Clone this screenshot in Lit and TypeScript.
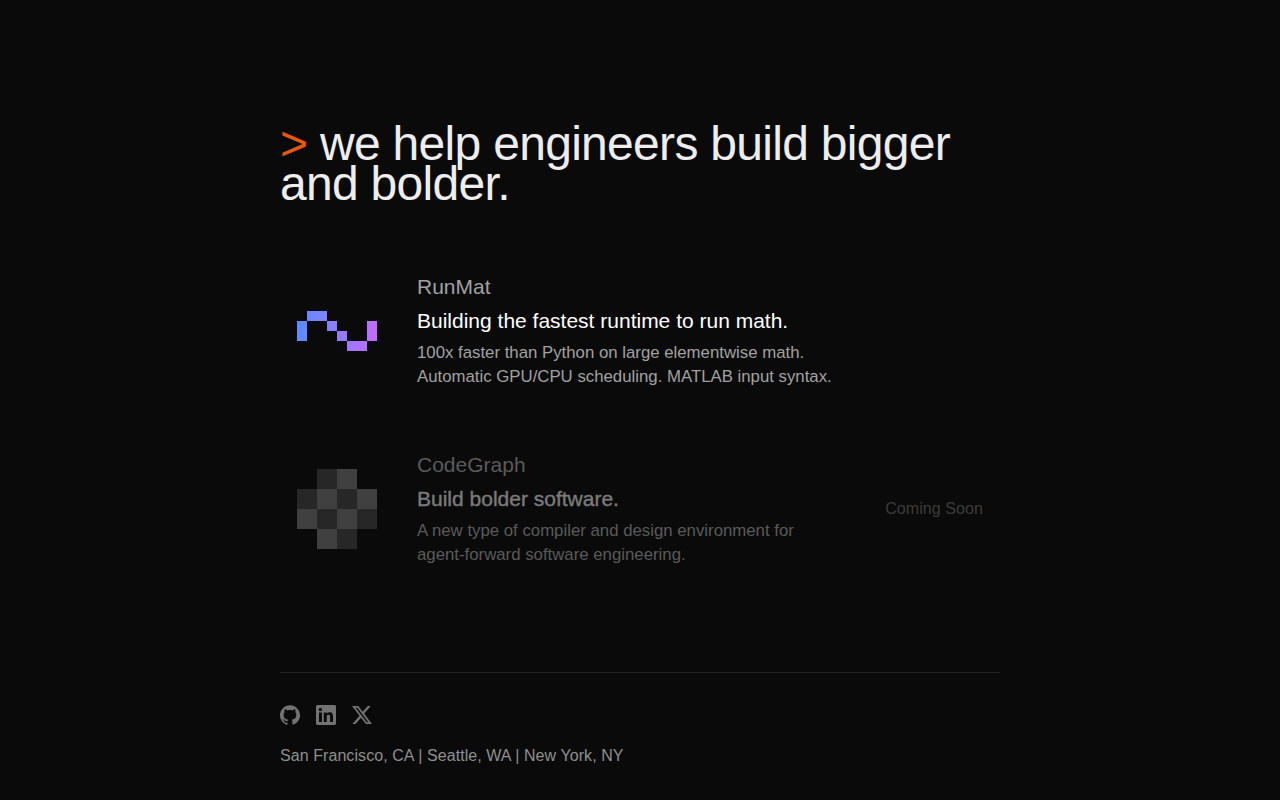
import { LitElement, html, css, svg } from 'lit';
import { customElement } from 'lit/decorators.js';

// [col, row, colour] on a 20px grid
const GRAPH_CELLS: [number, number, string][] = [
  [1, 0, '#272727'], [2, 0, '#404040'],
  [0, 1, '#272727'], [1, 1, '#404040'], [2, 1, '#272727'], [3, 1, '#404040'],
  [0, 2, '#404040'], [1, 2, '#272727'], [2, 2, '#404040'], [3, 2, '#272727'],
  [1, 3, '#404040'], [2, 3, '#272727'],
];

@customElement('app-root')
export class AppRoot extends LitElement {
  static styles = css`
    :host {
      display: block;
      min-height: 800px;
      background: #0a0a0a;
      font-family: 'Liberation Sans', Arial, sans-serif;
    }

    .page {
      width: 720px;
      margin: 0 auto;
      padding-top: 124px;
    }

    h1 {
      margin: 0 0 53px;
      font-size: 48px;
      line-height: 40px;
      font-weight: 400;
      letter-spacing: -0.7px;
      color: #ededed;
    }

    h1 span {
      color: #ea580c;
    }

    .projects {
      display: flex;
      flex-direction: column;
      gap: 30px;
    }

    .project {
      display: flex;
      align-items: center;
      gap: 40px;
      padding: 16px 17px;
    }

    .logo {
      flex: none;
      display: block;
      width: 80px;
      height: 80px;
    }

    .body {
      flex: 1;
    }

    .name {
      font-size: 21px;
      line-height: 28px;
      color: #a1a1a1;
      margin-bottom: 6px;
    }

    .tagline {
      font-size: 21px;
      line-height: 28px;
      color: #ffffff;
      margin-bottom: 6px;
    }

    .desc {
      font-size: 16.8px;
      line-height: 24px;
      color: #a1a1a1;
    }

    .project.soon .name,
    .project.soon .desc {
      color: #5a5a5a;
    }

    .project.soon .tagline {
      color: #7a7a7a;
      -webkit-text-stroke: 0.4px #7a7a7a;
    }

    .badge {
      flex: none;
      font-size: 16px;
      letter-spacing: 0.08px;
      color: #3c3c3c;
    }

    footer {
      margin-top: 89px;
      border-top: 1px solid #232323;
      padding-top: 32px;
    }

    .social {
      display: flex;
      gap: 16px;
      margin-bottom: 19px;
    }

    .social svg {
      display: block;
      width: 20px;
      height: 20px;
      fill: #737373;
    }

    .offices {
      font-size: 16px;
      line-height: 24px;
      letter-spacing: 0.07px;
      color: #8f8f8f;
    }
  `;

  private runmatLogo() {
    return html`<svg class="logo" viewBox="0 0 80 80">
      <defs>
        <linearGradient id="rm" gradientUnits="userSpaceOnUse" x1="0" y1="0" x2="80" y2="0">
          <stop offset="0" stop-color="#5a8dff"></stop>
          <stop offset="1" stop-color="#c26bff"></stop>
        </linearGradient>
      </defs>
      <path fill="url(#rm)" d="M0 10h10v20H0zM10 0h20v10H10zM30 10h10v10H30zM40 20h10v10H40zM50 30h20v10H50zM70 10h10v20H70z" transform="translate(0 20)"></path>
    </svg>`;
  }

  private graphLogo() {
    return html`<svg class="logo" viewBox="0 0 80 80">
      ${GRAPH_CELLS.map(([c, r, fill]) => svg`<rect x=${c * 20} y=${r * 20} width="20" height="20" fill=${fill}></rect>`)}
    </svg>`;
  }

  render() {
    return html`
      <div class="page">
        <h1><span>&gt;</span> we help engineers build bigger and bolder.</h1>
        <div class="projects">
          <div class="project">
            ${this.runmatLogo()}
            <div class="body">
              <div class="name">RunMat</div>
              <div class="tagline">Building the fastest runtime to run math.</div>
              <div class="desc">100x faster than Python on large elementwise math.<br />Automatic GPU/CPU scheduling. MATLAB input syntax.</div>
            </div>
          </div>
          <div class="project soon">
            ${this.graphLogo()}
            <div class="body">
              <div class="name">CodeGraph</div>
              <div class="tagline">Build bolder software.</div>
              <div class="desc">A new type of compiler and design environment for<br />agent-forward software engineering.</div>
            </div>
            <div class="badge">Coming Soon</div>
          </div>
        </div>
        <footer>
          <div class="social">
            <svg viewBox="0 0 24 24"><path d="M12 .297c-6.63 0-12 5.373-12 12 0 5.303 3.438 9.8 8.205 11.385.6.113.82-.258.82-.577 0-.285-.01-1.04-.015-2.04-3.338.724-4.042-1.61-4.042-1.61C4.422 18.07 3.633 17.7 3.633 17.7c-1.087-.744.084-.729.084-.729 1.205.084 1.838 1.236 1.838 1.236 1.07 1.835 2.809 1.305 3.495.998.108-.776.417-1.305.76-1.605-2.665-.3-5.466-1.332-5.466-5.93 0-1.31.465-2.38 1.235-3.22-.135-.303-.54-1.523.105-3.176 0 0 1.005-.322 3.3 1.23.96-.267 1.98-.399 3-.405 1.02.006 2.04.138 3 .405 2.28-1.552 3.285-1.23 3.285-1.23.645 1.653.24 2.873.12 3.176.765.84 1.23 1.91 1.23 3.22 0 4.61-2.805 5.625-5.475 5.92.42.36.81 1.096.81 2.22 0 1.606-.015 2.896-.015 3.286 0 .315.21.69.825.57C20.565 22.092 24 17.592 24 12.297c0-6.627-5.373-12-12-12"></path></svg>
            <svg viewBox="0 0 24 24"><path d="M20.447 20.452h-3.554v-5.569c0-1.328-.027-3.037-1.852-3.037-1.853 0-2.136 1.445-2.136 2.939v5.667H9.351V9h3.414v1.561h.046c.477-.9 1.637-1.85 3.37-1.85 3.601 0 4.267 2.37 4.267 5.455v6.286zM5.337 7.433c-1.144 0-2.063-.926-2.063-2.065 0-1.138.92-2.063 2.063-2.063 1.14 0 2.064.925 2.064 2.063 0 1.139-.925 2.065-2.064 2.065zm1.782 13.019H3.555V9h3.564v11.452zM22.225 0H1.771C.792 0 0 .774 0 1.729v20.542C0 23.227.792 24 1.771 24h20.451C23.2 24 24 23.227 24 22.271V1.729C24 .774 23.2 0 22.222 0h.003z"></path></svg>
            <svg viewBox="0 0 24 24"><path d="M18.901 1.153h3.68l-8.04 9.19L24 22.846h-7.406l-5.8-7.584-6.638 7.584H.474l8.6-9.83L0 1.154h7.594l5.243 6.932ZM17.61 20.644h2.039L6.486 3.24H4.298Z"></path></svg>
          </div>
          <div class="offices">San Francisco, CA | Seattle, WA | New York, NY</div>
        </footer>
      </div>
    `;
  }
}
